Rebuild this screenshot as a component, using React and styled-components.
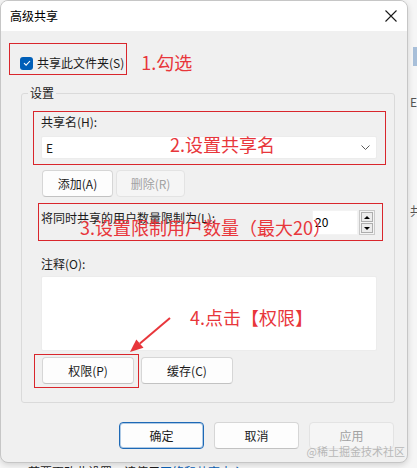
import React from "react";
import styled, { createGlobalStyle, css } from "styled-components";

const GlobalStyle = createGlobalStyle`
  html, body {
    margin: 0;
    padding: 0;
  }
  body {
    font-family: "Noto Sans CJK SC", "Microsoft YaHei UI", sans-serif;
    font-size: 12px;
    color: #1b1b1b;
  }
`;

const RED = "#d9262c";
const ANNOT = "#e8363b";

const App = () => {
  return (
    <Page>
      <GlobalStyle />
      <BehindText>
        若要更改此设置，请使用<BehindLink>网络和共享中心</BehindLink>。
      </BehindText>
      <EdgeMark $top={47} $h={19} />
      <EdgeChar $top={94}>E</EdgeChar>
      <EdgeChar $top={203}>共</EdgeChar>

      <Dialog>
        <TitleBar>
          <Title>高级共享</Title>
          <CloseIcon viewBox="0 0 12 12">
            <path d="M0.5 0.5 L11.5 11.5 M11.5 0.5 L0.5 11.5" />
          </CloseIcon>
        </TitleBar>

        <Body>
          <TopRow>
            <Frame $t={13} $r={3} $b={5} $l={11}>
              <CheckRow>
                <CheckBox>
                  <svg viewBox="0 0 12 12" width="12" height="12">
                    <path d="M3 6.2 L5.1 8.2 L9 4" fill="none" stroke="#fff" strokeWidth="1.1" />
                  </svg>
                </CheckBox>
                <span>共享此文件夹(S)</span>
              </CheckRow>
            </Frame>
            <InlineAnnot>1.勾选</InlineAnnot>
          </TopRow>

          <Group>
            <Legend>设置</Legend>
            <GroupContent>
              <Frame $t={3} $r={9} $b={6} $l={8} $mt={13}>
                <Label>共享名(H):</Label>
                <Combo>
                  <span>E</span>
                  <svg viewBox="0 0 9 5" width="9" height="5">
                    <path d="M0.5 0.5 L4.5 4.5 L8.5 0.5" fill="none" stroke="#5a5a5a" strokeWidth="1" />
                  </svg>
                </Combo>
              </Frame>

              <ButtonRow $mt={11} $gap={3}>
                <Button $w={71}>添加(A)</Button>
                <Button $w={69} $variant="disabled">删除(R)</Button>
              </ButtonRow>

              <Frame $t={7} $r={6} $b={6} $l={3} $mt={13}>
                <SpinRow>
                  <Label>将同时共享的用户数量限制为(L):</Label>
                  <SpinField>
                    <SpinInput>20</SpinInput>
                    <SpinButtons>
                      <SpinButton $dir="up" />
                      <SpinButton $dir="down" />
                    </SpinButtons>
                  </SpinField>
                </SpinRow>
              </Frame>

              <Label $mt={21}>注释(O):</Label>
              <TextBox />

              <ButtonRow $mt={6} $gap={7}>
                <Frame $t={3} $r={5} $b={4} $l={8}>
                  <Button $w={92}>权限(P)</Button>
                </Frame>
                <Button $w={92}>缓存(C)</Button>
              </ButtonRow>
            </GroupContent>
          </Group>

          <Footer>
            <Button $w={85} $variant="primary">确定</Button>
            <Button $w={85}>取消</Button>
            <Button $w={85} $variant="disabled">应用</Button>
          </Footer>
        </Body>

        <Annot $x={169} $y={131}>2.设置共享名</Annot>
        <Annot $x={79} $y={214}>3.设置限制用户数量（最大20）</Annot>
        <Annot $x={189} $y={304}>4.点击【权限】</Annot>
        <Arrow viewBox="0 0 60 50">
          <path d="M50 8 L19.9 33.6" stroke={ANNOT} strokeWidth="2" fill="none" />
          <polygon points="10,42 23.5,37.8 16.3,29.4" fill={ANNOT} />
        </Arrow>
        <Watermark>@稀土掘金技术社区</Watermark>
      </Dialog>
    </Page>
  );
};

const Page = styled.div`
  position: relative;
  width: 417px;
  height: 468px;
  overflow: hidden;
  background: #f6f6f6;
`;

const BehindText = styled.div`
  padding: 464px 0 0 28px;
  line-height: 16px;
  white-space: nowrap;
  color: #1b1b1b;
`;

const BehindLink = styled.span`
  color: #0a5fb4;
`;

const EdgeMark = styled.div`
  position: absolute;
  left: 413px;
  top: ${(p) => p.$top}px;
  width: 4px;
  height: ${(p) => p.$h}px;
  background: #a8bfd9;
`;

const EdgeChar = styled.div`
  position: absolute;
  left: 410px;
  top: ${(p) => p.$top}px;
  line-height: 16px;
  color: #555;
`;

const Dialog = styled.div`
  position: absolute;
  left: 0;
  top: 0;
  width: 408px;
  height: 463px;
  box-sizing: border-box;
  display: flex;
  flex-direction: column;
  background: #f0f0f0;
  border: 1px solid #c6c6c6;
  border-radius: 8px;
  overflow: hidden;
  box-shadow: 0 2px 6px rgba(0, 0, 0, 0.15);
`;

const TitleBar = styled.div`
  height: 30px;
  flex-shrink: 0;
  display: flex;
  align-items: center;
  justify-content: space-between;
  padding: 0 10px 0 9px;
  background: #fff;
`;

const Title = styled.div`
  font-size: 12px;
  line-height: 16px;
  color: #000;
`;

const CloseIcon = styled.svg`
  width: 12px;
  height: 12px;
  stroke: #1a1a1a;
  stroke-width: 1.1;
  fill: none;
`;

const Body = styled.div`
  flex: 1;
  display: flex;
  flex-direction: column;
  padding: 25px 12px 0 8px;
`;

const TopRow = styled.div`
  display: flex;
  align-items: flex-start;
  padding-left: 11px;
`;

const Frame = styled.div`
  margin: ${(p) => (p.$mt || 0) - p.$t}px ${(p) => -p.$r}px ${(p) => -p.$b}px
    ${(p) => -p.$l}px;
  padding: ${(p) => p.$t - 1}px ${(p) => p.$r - 1}px ${(p) => p.$b - 1}px
    ${(p) => p.$l - 1}px;
  border: 1px solid ${RED};
`;

const CheckRow = styled.label`
  display: flex;
  align-items: center;
  gap: 4px;
  height: 14px;
  line-height: 14px;
  color: #1b1b1b;
`;

const CheckBox = styled.span`
  width: 13px;
  height: 13px;
  border-radius: 3px;
  background: #005fb8;
  display: flex;
  align-items: center;
  justify-content: center;
`;

const annotText = css`
  font-size: 18px;
  color: ${ANNOT};
  white-space: nowrap;
`;

const InlineAnnot = styled.div`
  ${annotText};
  line-height: 14px;
  margin: -1px 0 0 17px;
`;

const Annot = styled.div`
  ${annotText};
  position: absolute;
  left: ${(p) => p.$x}px;
  top: ${(p) => p.$y}px;
  line-height: 24px;
`;

const Arrow = styled.svg`
  position: absolute;
  left: 119px;
  top: 309px;
  width: 60px;
  height: 50px;
`;

const Group = styled.fieldset`
  margin: 15px 0 0 12px;
  padding: 0 5px 18px 6px;
  border: 1px solid #dadada;
  border-radius: 3px;
  min-width: 0;
`;

const Legend = styled.legend`
  padding: 0 2px;
  line-height: 16px;
  color: #1b1b1b;
`;

const GroupContent = styled.div`
  display: flex;
  flex-direction: column;
  padding: 0 12px 0 13px;
`;

const Label = styled.div`
  line-height: 16px;
  margin-top: ${(p) => p.$mt || 0}px;
  white-space: nowrap;
`;

const Combo = styled.div`
  margin-top: 6px;
  height: 23px;
  box-sizing: border-box;
  display: flex;
  align-items: center;
  justify-content: space-between;
  padding: 0 6px 0 4px;
  background: #fff;
  border: 1px solid #ececec;
  border-radius: 2px;
  line-height: 16px;
`;

const ButtonRow = styled.div`
  display: flex;
  gap: ${(p) => p.$gap}px;
  margin-top: ${(p) => p.$mt}px;
  padding-left: 1px;
`;

const Button = styled.button`
  width: ${(p) => p.$w}px;
  height: 27px;
  padding: 0;
  font-family: inherit;
  font-size: 12px;
  line-height: 16px;
  border-radius: 4px;
  background: #fdfdfd;
  color: #1b1b1b;
  border: 1px solid #d6d6d6;
  border-bottom-color: #c2c2c2;
  ${(p) =>
    p.$variant === "disabled" &&
    css`
      background: #f5f5f5;
      color: #a2a2a2;
      border-color: #e3e3e3;
    `}
  ${(p) =>
    p.$variant === "primary" &&
    css`
      border-color: #1d69b6;
      box-shadow: inset 0 0 0 1px rgba(29, 105, 182, 0.35);
    `}
`;

const SpinRow = styled.div`
  display: flex;
  justify-content: space-between;
  align-items: flex-start;
  height: 25px;
  padding-right: 2px;
`;

const SpinField = styled.div`
  display: flex;
  gap: 1px;
  height: 25px;
`;

const SpinInput = styled.div`
  width: 46px;
  box-sizing: border-box;
  padding: 3px 0 0 2px;
  line-height: 16px;
  background: #fff;
  border: 1px solid #f3f3f3;
  color: #000;
`;

const SpinButtons = styled.div`
  width: 16px;
  box-sizing: border-box;
  display: flex;
  flex-direction: column;
  gap: 1px;
  padding: 1px;
  border: 1px solid #c9c9c9;
  background: #f4f4f4;
`;

const SpinButton = styled.div`
  flex: 1;
  display: flex;
  align-items: center;
  justify-content: center;
  border: 1px solid #adadad;
  background: #ececec;
  &::after {
    content: "";
    border-left: 3px solid transparent;
    border-right: 3px solid transparent;
    ${(p) =>
      p.$dir === "up"
        ? css`
            border-bottom: 3px solid #000;
          `
        : css`
            border-top: 3px solid #000;
          `}
  }
`;

const TextBox = styled.div`
  margin-top: 4px;
  height: 75px;
  box-sizing: border-box;
  background: #fff;
  border: 1px solid #ececec;
  border-radius: 2px;
`;

const Footer = styled.div`
  display: flex;
  justify-content: flex-end;
  gap: 10px;
  margin-top: 19px;
  padding-right: 1px;
`;

const Watermark = styled.div`
  position: absolute;
  right: 2px;
  top: 443px;
  font-size: 11px;
  line-height: 14px;
  color: #b8b8b8;
  white-space: nowrap;
`;

export default App;
